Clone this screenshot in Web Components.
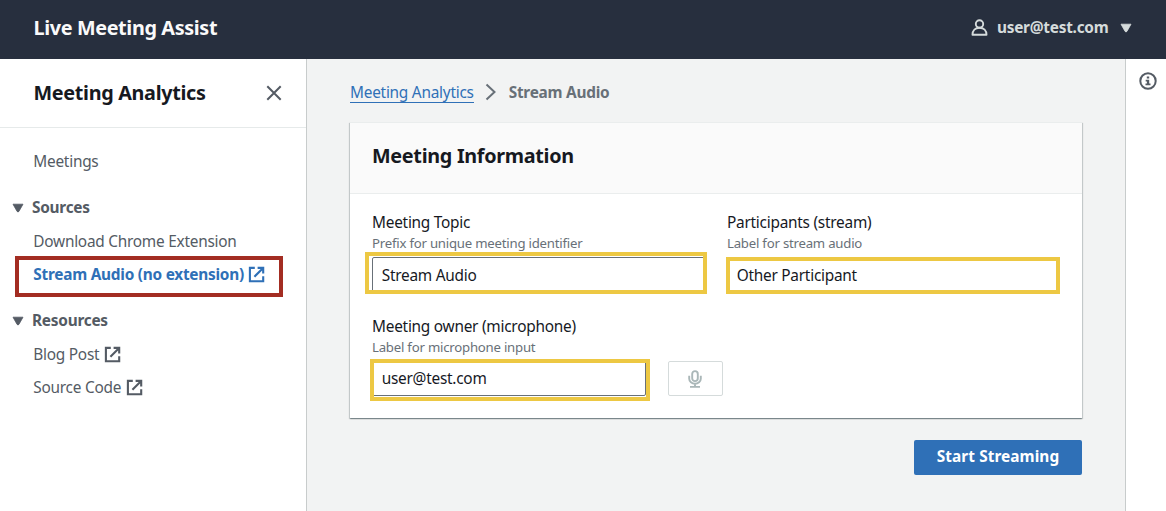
<!DOCTYPE html>
<html lang="en">
<head>
<meta charset="utf-8">
<title>Live Meeting Assist</title>
<style>
html,body{margin:0;height:100%;overflow:hidden}
body{font-family:"Noto Sans",sans-serif;font-size:15.4px;letter-spacing:-.25px;color:#16191f}
</style>
</head>
<body>
<lma-app></lma-app>
<script>
function define(name, html) {
  const t = document.createElement('template');
  t.innerHTML = html;
  customElements.define(name, class extends HTMLElement {
    constructor() {
      super();
      this.attachShadow({mode: 'open'}).appendChild(t.content.cloneNode(true));
    }
  });
}

define('icon-external', `<style>:host{display:inline-flex;width:17px;height:17px}svg{display:block}</style>
<svg width="17" height="17" viewBox="0 0 17 17" fill="none" stroke="currentColor" stroke-width="2.100"><path d="M6.800 1.900H1.900v13.300h13.300v-5M9.600 1.900h5.600v5.600M14.900 2.200L6.400 10.700"/></svg>`);

define('icon-caret', `<style>:host{display:inline-flex}svg{display:block}</style>
<svg width="12" height="10" viewBox="0 0 12 10"><path d="M1 1.200h10L6.900 8.400q-.9 1.200-1.800 0z" fill="currentColor" stroke="currentColor" stroke-width=".8" stroke-linejoin="round"/></svg>`);

define('top-bar', `<style>
:host{display:flex;align-items:center;justify-content:space-between;height:59px;box-sizing:border-box;padding:0 34px 4px 33.500px;background:#272f3e;color:#fafafa}
.title{font-size:19.800px;font-weight:700;letter-spacing:-.36px;line-height:30px}
.user{display:flex;align-items:center;color:#d5dbdb;font-weight:700;line-height:24px}
.user svg{margin-right:9px}
.user icon-caret{margin-left:11.500px}
</style>
<div class="title">Live Meeting Assist</div>
<div class="user"><svg width="17" height="18" viewBox="0 0 17 18" fill="none" stroke="currentColor" stroke-width="1.900"><circle cx="8.500" cy="5" r="3.700"/><path d="M1.500 15.800h14c0-4.200-2.800-7-7-7s-7 2.800-7 7z" stroke-linejoin="round"/></svg><slot></slot><icon-caret></icon-caret></div>`);

define('nav-item', `<style>
:host{display:flex;align-items:center;height:24px;margin-bottom:9px;padding-left:33.300px;color:#545b64;position:relative;white-space:nowrap}
:host([external]) icon-external{margin-left:4.500px}
:host(:not([external])) icon-external{display:none}
:host([active]){color:#2f70b7;font-weight:700}
.mark{display:none;position:absolute;left:15px;top:-6px;width:268px;height:41px;box-sizing:border-box;border:4px solid #a32d22}
:host([active]) .mark{display:block}
</style><slot></slot><icon-external></icon-external><div class="mark"></div>`);

define('nav-section', `<style>
:host{display:block;margin-top:22px}
.head{display:flex;align-items:center;height:24px;margin-bottom:10px;padding-left:12px;gap:8px;font-weight:700;color:#545b64}
icon-caret{margin-top:2px}
</style><div class="head"><icon-caret></icon-caret><slot name="title"></slot></div><slot></slot>`);

define('side-nav', `<style>
:host{display:block;box-sizing:border-box;width:307px;background:#fff;border-right:1px solid #c8cccc}
header{display:flex;align-items:center;justify-content:space-between;box-sizing:border-box;height:69px;padding:0 24px 2px 33.500px;border-bottom:1px solid #e6eaea;font-size:19.800px;letter-spacing:-.32px;font-weight:700;color:#16191f}
header svg{margin-top:1px}
nav{padding-top:21px}
</style>
<header><span>Meeting Analytics</span><svg width="16" height="16" viewBox="0 0 16 16" fill="none" stroke="#545b64" stroke-width="2"><path d="M1.300 1.300L14.700 14.700M14.700 1.300L1.300 14.700"/></svg></header>
<nav>
<nav-item>Meetings</nav-item>
<nav-section><span slot="title">Sources</span><nav-item>Download Chrome Extension</nav-item><nav-item external active>Stream Audio (no extension)</nav-item></nav-section>
<nav-section><span slot="title">Resources</span><nav-item external>Blog Post</nav-item><nav-item external>Source Code</nav-item></nav-section>
</nav>`);

define('bread-crumbs', `<style>
:host{display:flex;align-items:center;height:24px}
a{color:#2f70b7;line-height:21px;height:20px;border-bottom:1px solid #2f70b7;margin-top:1px}
svg{margin:0 12px 0 11px}
b{color:#687078}
</style><a>Meeting Analytics</a><svg width="12" height="18" viewBox="0 0 12 18" fill="none" stroke="#687078" stroke-width="2"><path d="M1.500 1.500L9.500 9l-8 7.500"/></svg><b>Stream Audio</b>`);

define('form-field', `<style>
:host{display:block;min-width:0}
.label{line-height:23px;height:23px}
.hint{font-size:13.200px;letter-spacing:-.22px;line-height:19px;height:19px;margin-bottom:4px;color:#687078}
</style><div class="label"><slot name="label"></slot></div><div class="hint"><slot name="hint"></slot></div><slot></slot>`);

define('text-box', `<style>
:host{display:flex;align-items:center;position:relative;box-sizing:border-box;height:35px;border:1px solid #687078;border-radius:2px;background:#fff;padding:0 9px 0 8.700px}
.mark{position:absolute;box-sizing:border-box;border:4px solid #edc843;inset:var(--mark)}
</style><slot></slot><div class="mark"></div>`);

define('mic-button', `<style>
:host{display:flex;align-items:center;justify-content:center;box-sizing:border-box;width:55px;height:35px;padding-right:2px;border:1px solid #d5dbdb;border-radius:2px;background:#fff;color:#aab7b8}
</style><svg width="14" height="18" viewBox="0 0 14 18" fill="none" stroke="currentColor" stroke-width="1.900"><rect x="4.200" y="1.100" width="5.600" height="10" rx="2.800"/><path d="M1.200 5.800v3a5.800 4.900 0 0 0 11.600 0v-3M7 13.500v3.500M2 16.900h10"/></svg>`);

define('meeting-card', `<style>
:host{display:block;box-sizing:border-box;height:296px;background:#fff;box-shadow:0 1px 1px 0 rgba(0,28,36,.3),1px 1px 1px 0 rgba(0,28,36,.15),-1px 1px 1px 0 rgba(0,28,36,.15);border-top:1px solid #eaeded}
header{display:flex;align-items:center;box-sizing:border-box;height:71px;padding:0 22px 5px;background:#fafafa;border-bottom:1px solid #eaeded;font-size:19.800px;letter-spacing:-.3px;font-weight:700}
.body{display:grid;grid-template-columns:repeat(2,minmax(0,1fr));column-gap:22px;row-gap:23px;padding:17px 22px 22px}
.owner{display:flex;align-items:flex-end;gap:22px;white-space:nowrap}
.owner form-field{flex:none;width:274px}
.owner mic-button{flex:none}
.topic{--mark:-6px -3px -3px -8px}
.part{--mark:-1px -1px -3px -2px}
.topic,.part{padding-top:1px}
.own{padding-bottom:1px;--mark:-3px -5px -6px -3px}
</style>
<header>Meeting Information</header>
<div class="body">
<form-field><span slot="label">Meeting Topic</span><span slot="hint">Prefix for unique meeting identifier</span><text-box class="topic">Stream Audio</text-box></form-field>
<form-field><span slot="label">Participants (stream)</span><span slot="hint">Label for stream audio</span><text-box class="part">Other Participant</text-box></form-field>
<div class="owner"><form-field><span slot="label">Meeting owner (microphone)</span><span slot="hint">Label for microphone input</span><text-box class="own">user@test.com</text-box></form-field><mic-button></mic-button></div>
</div>`);

define('primary-button', `<style>
:host{display:flex;align-items:center;justify-content:center;box-sizing:border-box;width:168px;height:35px;padding-bottom:2px;border-radius:2px;background:#2f70b7;color:#fff;font-weight:700;letter-spacing:.07px}
</style><slot></slot>`);

define('info-rail', `<style>
:host{display:flex;justify-content:center;align-items:flex-start;box-sizing:border-box;width:41px;padding:13px 0 0 3px;background:#fff;border-left:1px solid #c8cccc}
</style><svg width="18" height="18" viewBox="0 0 18 18"><circle cx="9" cy="9" r="7.700" fill="none" stroke="#545b64" stroke-width="2"/><path d="M7.800 4.500h2.400v2H7.800zM6.700 7.800h3.500v3.600h1.300v1.800H6.500v-1.800h1.400V9.500H6.700z" fill="#545b64"/></svg>`);

define('lma-app', `<style>
:host{display:flex;flex-direction:column;height:100vh;background:#f2f3f3}
.row{display:flex;flex:1;min-height:0}
main{flex:1;padding:21px 43px 0;min-width:0}
meeting-card{margin:18px 0 22px}
.actions{display:flex;justify-content:flex-end}
</style>
<top-bar>user@test.com</top-bar>
<div class="row"><side-nav></side-nav>
<main><bread-crumbs></bread-crumbs><meeting-card></meeting-card><div class="actions"><primary-button>Start Streaming</primary-button></div></main>
<info-rail></info-rail></div>`);
</script>
</body>
</html>
